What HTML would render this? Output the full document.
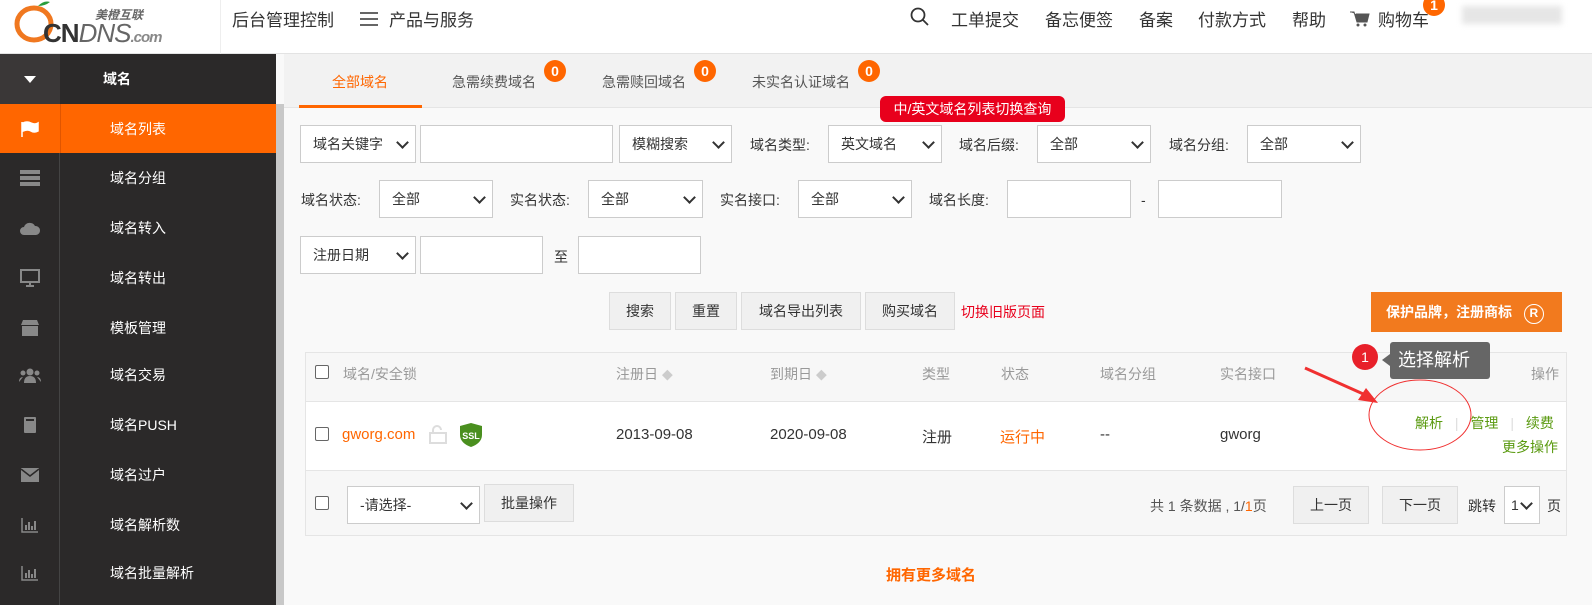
<!DOCTYPE html>
<html><head><meta charset="utf-8"><style>
*{margin:0;padding:0;box-sizing:border-box}
body{width:1592px;height:605px;overflow:hidden;background:#f9f9f9;font-family:"Liberation Sans","Noto Sans CJK SC",sans-serif;font-size:14px;color:#333;position:relative}
.a{position:absolute}
.hdr{left:0;top:0;width:1592px;height:54px;background:#fff;border-bottom:1px solid #e3e3e3}
.hn{font-size:17px;color:#333;top:6px}
.side{left:0;top:54px;width:276px;height:551px;background:#2b2929}
.icol{left:0;top:54px;width:60px;height:551px;background:#2b2929;border-right:1px solid #444}
.it{left:60px;width:216px;height:50px;line-height:50px;color:#fff;padding-left:50px;font-size:14px}
.ic{left:0;width:60px;height:50px;display:flex;align-items:center;justify-content:center}
.sel{border:1px solid #ccc;background:#fff;height:38px;line-height:36px;padding-left:12px;font-size:14px;color:#333}
.sel:after{content:"";position:absolute;right:8px;top:12px;width:7px;height:7px;border-right:2px solid #333;border-bottom:2px solid #333;transform:rotate(45deg)}
.inp{border:1px solid #ccc;background:#fff;height:38px}
.lb{font-size:14px;color:#333}
.btn{border:1px solid #ddd;background:#f0f0f0;height:38px;line-height:36px;text-align:center;font-size:14px;color:#333}
.badge{width:22px;height:22px;border-radius:50%;background:#f60;color:#fff;font-size:14px;text-align:center;line-height:22px;font-weight:bold}
.th{color:#999;font-size:14px;top:364px}
.td{font-size:15px;color:#333;top:426px}
.cb{width:14px;height:14px;border:1.5px solid #666;border-radius:2px;background:#fff}
</style></head><body>
<div class="a hdr"></div>
<svg class="a" style="left:14px;top:0" width="48" height="44" viewBox="0 0 48 44"><ellipse cx="20" cy="24" rx="17" ry="16" fill="none" stroke="#f07820" stroke-width="5"/><path d="M24 6 q6-6 12-4 q-5 4-12 4z" fill="#2a9d3a"/></svg>
<div class="a" style="left:43px;top:18px;font:bold 26px 'Liberation Sans',sans-serif;color:#333;letter-spacing:-1px">CN<span style="font-weight:normal;font-style:italic;color:#666">DNS</span><span style="font-size:15px;color:#888;font-style:italic">.com</span></div>
<div class="a" style="left:95px;top:6px;font-size:12px;font-weight:bold;font-style:italic;color:#666">美橙互联</div>
<div class="a" style="left:220px;top:0;width:1px;height:54px;background:#eee"></div>
<div class="a hn" style="left:232px">后台管理控制</div>
<div class="a" style="left:360px;top:12px;width:18px;height:14px;border-top:2px solid #666;border-bottom:2px solid #666"><div style="margin-top:4px;border-top:2px solid #666"></div></div>
<div class="a hn" style="left:389px">产品与服务</div>
<svg class="a" style="left:910px;top:7px" width="20" height="20"><circle cx="8" cy="8" r="6.5" fill="none" stroke="#333" stroke-width="1.8"/><path d="M13 13l5 5" stroke="#333" stroke-width="1.8"/></svg>
<div class="a hn" style="left:951px">工单提交</div>
<div class="a hn" style="left:1045px">备忘便签</div>
<div class="a hn" style="left:1139px">备案</div>
<div class="a hn" style="left:1198px">付款方式</div>
<div class="a hn" style="left:1292px">帮助</div>
<svg class="a" style="left:1350px;top:10px" width="20" height="18"><path d="M0 2h4l3 10h10l2-8H6" fill="#555" stroke="#555"/><circle cx="8" cy="15" r="1.5" fill="#555"/><circle cx="15" cy="15" r="1.5" fill="#555"/></svg>
<div class="a hn" style="left:1378px">购物车</div>
<div class="a badge" style="left:1423px;top:-6px">1</div>
<div class="a" style="left:1462px;top:6px;width:100px;height:18px;background:#e6e6e6;filter:blur(3px)"></div>

<div class="a side"></div>
<div class="a icol"></div>
<div class="a" style="left:0;top:54px;width:60px;height:50px;background:#3a3737"></div>
<div class="a" style="left:24px;top:76px;width:0;height:0;border-left:6px solid transparent;border-right:6px solid transparent;border-top:7px solid #fff"></div>
<div class="a" style="left:103px;top:54px;line-height:50px;color:#fff;font-weight:bold;font-size:14px">域名</div>
<div class="a" style="left:0;top:104px;width:276px;height:49px;background:#f60"></div>
<div class="a" style="left:60px;top:104px;width:1px;height:49px;background:#e05500"></div>
<div class="a" style="left:276px;top:104px;width:8px;height:501px;background:#c8c8c8"></div>
<div class="a it" style="top:104px">域名列表</div>
<div class="a it" style="top:153px">域名分组</div>
<div class="a it" style="top:203px">域名转入</div>
<div class="a it" style="top:253px">域名转出</div>
<div class="a it" style="top:303px">模板管理</div>
<div class="a it" style="top:350px">域名交易</div>
<div class="a it" style="top:400px">域名PUSH</div>
<div class="a it" style="top:450px">域名过户</div>
<div class="a it" style="top:500px">域名解析数</div>
<div class="a it" style="top:548px">域名批量解析</div>
<div class="a ic" style="top:104px"><svg width="20" height="18"><path d="M2 2v15M3 3q4-2 8 0t7 0v8q-4 2-7 0t-8 0z" fill="#fff" stroke="#fff" stroke-width="1.5"/></svg></div>
<div class="a ic" style="top:153px"><svg width="22" height="18"><rect x="1" y="1" width="20" height="4" fill="#888"/><rect x="1" y="7" width="20" height="4" fill="#888"/><rect x="1" y="13" width="20" height="4" fill="#888"/></svg></div>
<div class="a ic" style="top:203px"><svg width="22" height="16"><path d="M5 15a4 4 0 010-8 6 6 0 0111-1 4.5 4.5 0 011 9z" fill="#888"/></svg></div>
<div class="a ic" style="top:253px"><svg width="20" height="18"><rect x="1" y="1" width="18" height="12" fill="none" stroke="#888" stroke-width="2"/><path d="M6 17h8M10 13v4" stroke="#888" stroke-width="2"/></svg></div>
<div class="a ic" style="top:303px"><svg width="20" height="18"><path d="M1 6l2-5h14l2 5zM2 7h16v10H2z" fill="#888"/></svg></div>
<div class="a ic" style="top:350px"><svg width="22" height="16"><circle cx="11" cy="5" r="3.5" fill="#888"/><circle cx="4" cy="6" r="2.5" fill="#888"/><circle cx="18" cy="6" r="2.5" fill="#888"/><path d="M5 16q0-7 6-7t6 7zM0 15q0-5 4-5M22 15q0-5-4-5" fill="#888"/></svg></div>
<div class="a ic" style="top:400px"><svg width="14" height="18"><rect x="1" y="1" width="12" height="16" rx="1" fill="#888"/><rect x="3" y="3" width="8" height="2" fill="#2b2929"/></svg></div>
<div class="a ic" style="top:450px"><svg width="20" height="16"><rect x="1" y="1" width="18" height="14" fill="#888"/><path d="M1 2l9 7 9-7" stroke="#2b2929" stroke-width="1.5" fill="none"/></svg></div>
<div class="a ic" style="top:500px"><svg width="18" height="16"><path d="M1 1v14h16" stroke="#888" stroke-width="1.5" fill="none"/><path d="M5 13V8M8 13V5M11 13V9M14 13V4" stroke="#888" stroke-width="2"/></svg></div>
<div class="a ic" style="top:548px"><svg width="18" height="16"><path d="M1 1v14h16" stroke="#888" stroke-width="1.5" fill="none"/><path d="M5 13V8M8 13V5M11 13V9M14 13V4" stroke="#888" stroke-width="2"/></svg></div>

<div class="a" style="left:284px;top:54px;width:1308px;height:54px;background:#f2f2f2;border-bottom:1px solid #e5e5e5"></div>
<div class="a" style="left:332px;top:72px;color:#f60">全部域名</div>
<div class="a" style="left:299px;top:105px;width:123px;height:3px;background:#f60"></div>
<div class="a" style="left:452px;top:72px;color:#555">急需续费域名</div>
<div class="a badge" style="left:544px;top:60px">0</div>
<div class="a" style="left:602px;top:72px;color:#555">急需赎回域名</div>
<div class="a badge" style="left:694px;top:60px">0</div>
<div class="a" style="left:752px;top:72px;color:#555">未实名认证域名</div>
<div class="a badge" style="left:858px;top:60px">0</div>
<div class="a" style="left:880px;top:96px;width:185px;height:26px;background:#e8001c;color:#fff;border-radius:6px;font-size:14px;text-align:center;line-height:26px">中/英文域名列表切换查询</div>

<div class="a sel" style="left:300px;top:125px;width:116px">域名关键字</div>
<div class="a inp" style="left:420px;top:125px;width:193px"></div>
<div class="a sel" style="left:619px;top:125px;width:113px">模糊搜索</div>
<div class="a lb" style="left:750px;top:135px">域名类型:</div>
<div class="a sel" style="left:828px;top:125px;width:114px">英文域名</div>
<div class="a lb" style="left:959px;top:135px">域名后缀:</div>
<div class="a sel" style="left:1037px;top:125px;width:114px">全部</div>
<div class="a lb" style="left:1169px;top:135px">域名分组:</div>
<div class="a sel" style="left:1247px;top:125px;width:114px">全部</div>

<div class="a lb" style="left:301px;top:190px">域名状态:</div>
<div class="a sel" style="left:379px;top:180px;width:114px">全部</div>
<div class="a lb" style="left:510px;top:190px">实名状态:</div>
<div class="a sel" style="left:588px;top:180px;width:115px">全部</div>
<div class="a lb" style="left:720px;top:190px">实名接口:</div>
<div class="a sel" style="left:798px;top:180px;width:114px">全部</div>
<div class="a lb" style="left:929px;top:190px">域名长度:</div>
<div class="a inp" style="left:1007px;top:180px;width:124px"></div>
<div class="a lb" style="left:1141px;top:192px">-</div>
<div class="a inp" style="left:1158px;top:180px;width:124px"></div>

<div class="a sel" style="left:300px;top:236px;width:116px">注册日期</div>
<div class="a inp" style="left:420px;top:236px;width:123px"></div>
<div class="a lb" style="left:554px;top:247px">至</div>
<div class="a inp" style="left:578px;top:236px;width:123px"></div>

<div class="a btn" style="left:609px;top:292px;width:62px">搜索</div>
<div class="a btn" style="left:675px;top:292px;width:62px">重置</div>
<div class="a btn" style="left:741px;top:292px;width:120px">域名导出列表</div>
<div class="a btn" style="left:865px;top:292px;width:90px">购买域名</div>
<div class="a" style="left:961px;top:302px;color:#e8001c">切换旧版页面</div>
<div class="a" style="left:1371px;top:292px;width:191px;height:40px;background:#f27a1e;color:#fff;font-weight:bold;font-size:14px;line-height:40px;padding-left:15px">保护品牌，注册商标 <span style="display:inline-block;width:20px;height:20px;border:1.5px solid #fff;border-radius:50%;text-align:center;line-height:17px;font-size:12px;margin-left:8px">R</span></div>

<div class="a" style="left:305px;top:352px;width:1262px;height:184px;border:1px solid #e5e5e5;background:#fff"></div>
<div class="a" style="left:306px;top:353px;width:1260px;height:49px;background:#f7f7f7;border-bottom:1px solid #e5e5e5"></div>
<div class="a" style="left:306px;top:470px;width:1260px;height:65px;background:#f7f7f7;border-top:1px solid #e5e5e5"></div>
<div class="a cb" style="left:315px;top:365px"></div>
<div class="a th" style="left:343px">域名/安全锁</div>
<div class="a th" style="left:616px">注册日 <span style="color:#ccc;font-size:11px">◆</span></div>
<div class="a th" style="left:770px">到期日 <span style="color:#ccc;font-size:11px">◆</span></div>
<div class="a th" style="left:922px">类型</div>
<div class="a th" style="left:1001px">状态</div>
<div class="a th" style="left:1100px">域名分组</div>
<div class="a th" style="left:1220px">实名接口</div>
<div class="a th" style="left:1531px">操作</div>

<div class="a cb" style="left:315px;top:427px"></div>
<div class="a td" style="left:342px;color:#f60">gworg.com</div>
<svg class="a" style="left:428px;top:424px" width="20" height="20"><path d="M5 9V6a4 4 0 018 0" fill="none" stroke="#ddd" stroke-width="2"/><rect x="2" y="9" width="16" height="10" fill="none" stroke="#ddd" stroke-width="2"/></svg>
<svg class="a" style="left:458px;top:422px" width="26" height="26"><path d="M13 1l11 3v9c0 6-5 10-11 12C7 23 2 19 2 13V4z" fill="#4a8f1f"/><text x="13" y="17" font-size="9" font-weight="bold" fill="#fff" text-anchor="middle" font-family="Liberation Sans">SSL</text></svg>
<div class="a td" style="left:616px">2013-09-08</div>
<div class="a td" style="left:770px">2020-09-08</div>
<div class="a td" style="left:922px">注册</div>
<div class="a td" style="left:1000px;color:#f60">运行中</div>
<div class="a td" style="left:1100px">--</div>
<div class="a td" style="left:1220px">gworg</div>
<div class="a" style="left:1415px;top:413px;color:#5a9a10">解析 <span style="color:#ddd;margin:0 8px">|</span> 管理 <span style="color:#ddd;margin:0 8px">|</span> 续费</div>
<div class="a" style="left:1502px;top:437px;color:#5a9a10">更多操作</div>
<div class="a" style="left:1390px;top:342px;width:100px;height:37px;background:#666;border-radius:3px;color:#fff;font-size:18px;line-height:37px;padding-left:8px">选择解析</div>
<div class="a" style="left:1382px;top:354px;width:0;height:0;border-top:6px solid transparent;border-bottom:6px solid transparent;border-right:8px solid #666"></div>
<div class="a" style="left:1352px;top:344px;width:26px;height:26px;border-radius:50%;background:#e8202a;color:#fff;text-align:center;line-height:26px;font-size:14px">1</div>
<svg class="a" style="left:1300px;top:360px" width="180" height="100"><path d="M5 8L70 37" stroke="#f03030" stroke-width="3"/><path d="M78 43L58 40L66 28z" fill="#f03030"/><ellipse cx="120" cy="55" rx="51" ry="35" fill="none" stroke="#f03030" stroke-width="1"/></svg>

<div class="a cb" style="left:315px;top:496px"></div>
<div class="a sel" style="left:347px;top:486px;width:133px">-请选择-</div>
<div class="a btn" style="left:484px;top:484px;width:90px">批量操作</div>
<div class="a" style="left:1150px;top:496px;color:#555">共 1 条数据 , 1/<span style="color:#f60">1</span>页</div>
<div class="a btn" style="left:1293px;top:486px;width:76px">上一页</div>
<div class="a btn" style="left:1382px;top:486px;width:76px">下一页</div>
<div class="a" style="left:1468px;top:496px">跳转</div>
<div class="a sel" style="left:1504px;top:486px;width:36px;padding-left:6px">1</div>
<div class="a" style="left:1547px;top:496px">页</div>

<div class="a" style="left:886px;top:564px;color:#f60;font-weight:bold;font-size:15px">拥有更多域名</div>
</body></html>
